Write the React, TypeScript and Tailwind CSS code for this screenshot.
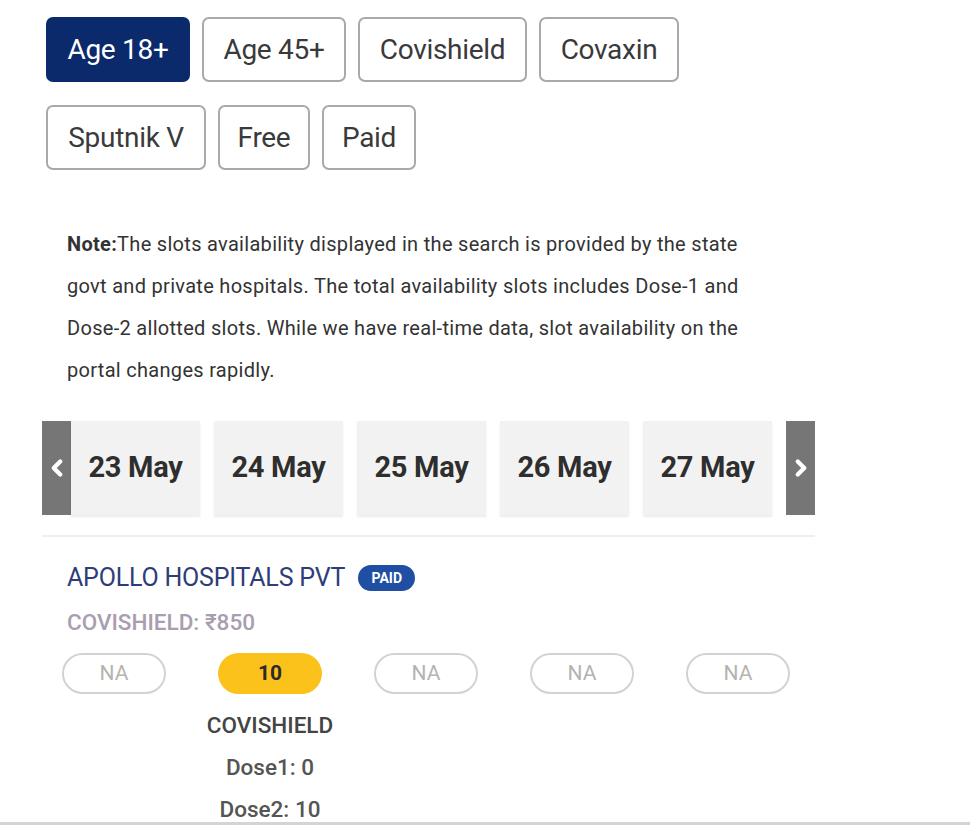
import { ChevronLeft, ChevronRight } from 'lucide-react';

const filters = [
  { label: 'Age 18+', w: 'w-[144px]', active: true },
  { label: 'Age 45+', w: 'w-[144px]' },
  { label: 'Covishield', w: 'w-[169px]' },
  { label: 'Covaxin', w: 'w-[140px]' },
  { label: 'Sputnik V', w: 'w-[160px]' },
  { label: 'Free', w: 'w-[92px]' },
  { label: 'Paid', w: 'w-[94px]' },
];

const dates = ['23 May', '24 May', '25 May', '26 May', '27 May'];

const slots = ['NA', '10', 'NA', 'NA', 'NA'];

const App = () => {
  return (
    <div className="h-[825px] w-[970px] bg-white border-b-[3px] border-[#d4d4d4] font-['Roboto',sans-serif] overflow-hidden">
      <div className="pl-[42px] pt-[17px]">
        {/* filter chips */}
        <div className="ml-[4px] flex w-[700px] flex-wrap gap-x-3 gap-y-[23px]">
          {filters.map((f) => (
            <button
              key={f.label}
              className={`${f.w} h-[65px] rounded-[7px] text-[28px] tracking-[-0.3px] flex items-center justify-center ${
                f.active
                  ? 'bg-[#0b2a6b] text-white border-2 border-[#0b2a6b]'
                  : 'bg-white text-[#3a3a3a] border-2 border-[#a9a9a9]'
              }`}
            >
              {f.label}
            </button>
          ))}
        </div>

        {/* note */}
        <p className="ml-[25px] mt-[53px] text-[20px] leading-[42px] tracking-[0.3px] text-[#333] whitespace-nowrap">
          <span className="font-bold">Note:</span>The slots availability displayed in the search is provided by the state
          <br />
          govt and private hospitals. The total availability slots includes Dose-1 and
          <br />
          Dose-2 allotted slots. While we have real-time data, slot availability on the
          <br />
          portal changes rapidly.
        </p>

        {/* date strip */}
        <div className="mt-[30px] w-[773px]">
          <div className="flex h-[94px]">
            <div className="w-[29px] bg-[#767676] flex items-center justify-center">
              <ChevronLeft className="text-white" size={26} strokeWidth={4} />
            </div>
            {dates.map((d) => (
              <div
                key={d}
                className="w-[129px] mr-[14px] bg-[#f2f2f2] shadow-[0_2px_2px_rgba(0,0,0,0.08)] flex items-center justify-center text-[29px] font-bold tracking-[-0.3px] text-[#2e2e2e]"
              >
                {d}
              </div>
            ))}
            <div className="w-[29px] bg-[#767676] flex items-center justify-center">
              <ChevronRight className="text-white" size={26} strokeWidth={4} />
            </div>
          </div>
          <div className="mt-[20px] h-[2px] bg-[#efefef]" />
        </div>

        {/* hospital */}
        <div className="ml-[25px] mt-[26px] h-[30px] flex items-center gap-[13px]">
          <span className="text-[25px] leading-[30px] text-[#2d3d78] tracking-[-0.2px]">APOLLO HOSPITALS PVT</span>
          <span className="h-[26px] w-[57px] rounded-full bg-[#1f4ea3] text-white text-[14px] font-bold flex items-center justify-center">
            PAID
          </span>
        </div>
        <div className="ml-[25px] mt-[15px] text-[22.5px] leading-[28px] font-medium text-[#a99db0]">COVISHIELD: ₹850</div>

        <div className="ml-[20px] mt-[17px] flex gap-[52px]">
          {slots.map((s, i) => (
            <div key={i} className="w-[104px] flex flex-col items-center">
              {s === 'NA' ? (
                <div className="w-[104px] h-[41px] rounded-full border-2 border-[#d2d2d2] text-[#b3b3b3] text-[21px] flex items-center justify-center">
                  NA
                </div>
              ) : (
                <>
                  <div className="w-[104px] h-[41px] rounded-full bg-[#fbc21b] text-[#2b2b2b] text-[21px] font-bold flex items-center justify-center">
                    {s}
                  </div>
                  <div className="mt-[10px] text-[22.5px] leading-[42px] font-medium text-[#444] whitespace-nowrap">COVISHIELD</div>
                  <div className="text-[22.5px] leading-[42px] font-medium text-[#555] whitespace-nowrap">Dose1: 0</div>
                  <div className="text-[22.5px] leading-[42px] font-medium text-[#555] whitespace-nowrap">Dose2: 10</div>
                </>
              )}
            </div>
          ))}
        </div>
      </div>
    </div>
  );
};

export default App;
